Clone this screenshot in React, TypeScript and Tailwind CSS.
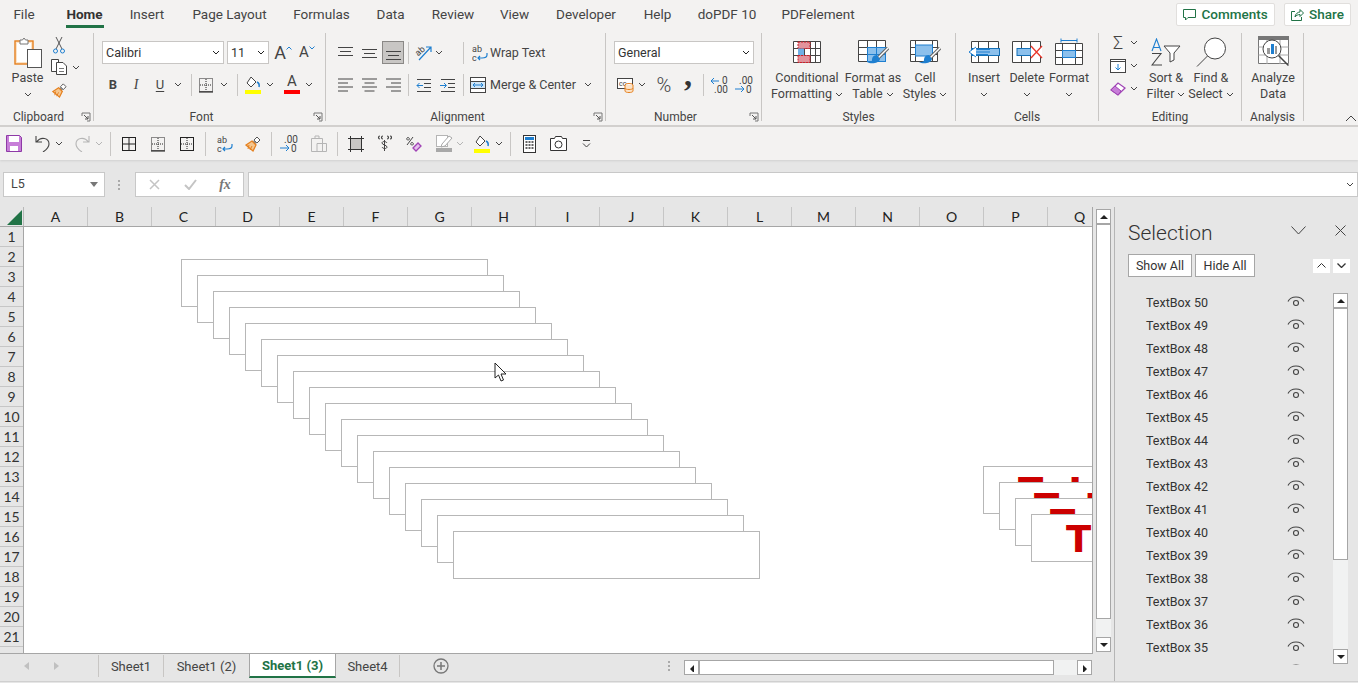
import type { ReactNode } from "react";

const tabs = [
  ["File", "w-[48px]"],
  ["Home", "w-[73px]"],
  ["Insert", "w-[52px]"],
  ["Page Layout", "w-[113px]"],
  ["Formulas", "w-[71px]"],
  ["Data", "w-[67px]"],
  ["Review", "w-[58px]"],
  ["View", "w-[65px]"],
  ["Developer", "w-[78px]"],
  ["Help", "w-[65px]"],
  ["doPDF 10", "w-[74px]"],
  ["PDFelement", "w-[108px]"],
];

const columns = ["A", "B", "C", "D", "E", "F", "G", "H", "I", "J", "K", "L", "M", "N", "O", "P", "Q"];
const rows = Array.from({ length: 21 }, (_, i) => i + 1);
const items = Array.from({ length: 17 }, (_, i) => 50 - i);

const Dd = ({ c = "#444" }: { c?: string }) => (
  <svg width="8" height="5" viewBox="0 0 8 5" className="shrink-0">
    <path d="M1 1l3 3 3-3" fill="none" stroke={c} strokeWidth="1" />
  </svg>
);

const Slot = ({ className, children }: { className: string; children?: ReactNode }) => (
  <div className={`flex shrink-0 items-center justify-center ${className}`}>{children}</div>
);

const Sep = ({ className = "" }: { className?: string }) => (
  <div className={`h-[22px] w-px shrink-0 bg-[#c8c6c4] ${className}`} />
);

const Launcher = () => (
  <svg width="10" height="10" viewBox="0 0 10 10" className="absolute bottom-[-1px] right-[2px]">
    <path d="M1 4V1h8v8H6" fill="none" stroke="#777" />
    <path d="M3 3l4 4M7 4v3H4" fill="none" stroke="#555" />
  </svg>
);

const Group = ({ w, label, launcher, children }: { w: string; label: string; launcher?: boolean; children: ReactNode }) => (
  <div className={`relative flex h-[88px] shrink-0 flex-col border-r border-[#c8c6c4] ${w}`}>
    <div className="h-[76px] shrink-0">{children}</div>
    <div className={`h-[16px] shrink-0 text-center text-[12px] leading-[16px] text-[#444] ${launcher ? "pr-[16px]" : ""}`}>{label}</div>
    {launcher && <Launcher />}
  </div>
);

const Big = ({ w, icon, l1, l2, dd }: { w: string; icon: ReactNode; l1: string; l2?: string; dd?: boolean }) => (
  <div className={`flex shrink-0 flex-col items-center ${w}`}>
    <div className="flex h-[37px] items-center justify-center">{icon}</div>
    <div className="h-[16px] whitespace-nowrap text-[12.5px] leading-[16px] text-[#444]">{l1}</div>
    <div className="flex h-[16px] items-center gap-[3px] whitespace-nowrap text-[12.5px] leading-[16px] text-[#444]">
      {l2}
      {dd && <Dd />}
    </div>
  </div>
);

const Select = ({ w, text }: { w: string; text: string }) => (
  <div className={`flex h-[23px] shrink-0 items-center justify-between border border-[#c8c6c4] bg-white pl-[3px] pr-[3px] text-[12.5px] text-[#333] ${w}`}>
    <span className="pt-[2px]">{text}</span>
    <Dd c="#222" />
  </div>
);

const Lines = ({ a }: { a: "l" | "c" | "r" }) => {
  const d = {
    l: "M1 2h15M1 6h10M1 10h15M1 14h10",
    c: "M1 2h15M3.5 6h10M1 10h15M3.5 14h10",
    r: "M1 2h15M6 6h10M1 10h15M6 14h10",
  }[a];
  return (
    <svg width="17" height="16" viewBox="0 0 17 16">
      <path d={d} stroke="#444" fill="none" />
    </svg>
  );
};

const VAlign = ({ p }: { p: number }) => (
  <svg width="17" height="16" viewBox="0 0 17 16">
    <path d={`M1 ${p + 0.5}h15M3 ${p + 4.5}h11M1 ${p + 8.5}h15`} stroke="#444" fill="none" />
  </svg>
);

const Indent = ({ right }: { right?: boolean }) => (
  <svg width="16" height="14" viewBox="0 0 16 14">
    <path d="M1 1.5h14M8 5.5h7M8 9.5h7M1 13.5h14" stroke="#444" fill="none" />
    <path d={right ? "M0 7.5h6M4 5l2.5 2.5L4 10" : "M7 7.5H1M3.5 5L1 7.5 3.5 10"} stroke="#1e7fd0" fill="none" />
  </svg>
);

const BorderIcon = ({ inner = "dot", outer = "dot" }: { inner?: string; outer?: string }) => (
  <svg width="16" height="16" viewBox="0 0 16 16">
    <rect x="1.5" y="1.5" width="13" height="13" fill="none" stroke="#222" strokeDasharray={outer === "dot" ? "1 1" : undefined} />
    <path d="M8 2v12M2 8h12" stroke="#222" strokeDasharray={inner === "dot" ? "1 1" : undefined} />
    {outer === "dot" && <path d="M1 15h14" stroke="#111" />}
  </svg>
);

const FillIcon = () => (
  <svg width="17" height="18" viewBox="0 0 17 18">
    <path d="M6 1l5 5-5 5-4-4z" fill="#fff" stroke="#444" />
    <path d="M12 6c2 1 2.500 3 2 5" fill="none" stroke="#1e7fd0" strokeWidth="1.500" />
    <rect x="0" y="14" width="16" height="4" fill="#ffff00" />
  </svg>
);

const FormatPainter = ({ s = 18 }: { s?: number }) => (
  <svg width={s} height={s} viewBox="0 0 18 18" className="shrink-0">
    <path d="M13 2l3 3-3 3-3-3z" fill="#fff" stroke="#555" />
    <path d="M10 5l3 3-2 1-2-2z" fill="#888" />
    <path d="M8 6l4 4-3 6-7-6z" fill="#f6c68d" stroke="#e5801f" strokeWidth="1.300" />
    <path d="M5 10l-1 4M8 11l-2 4" stroke="#e5801f" />
  </svg>
);

const PasteIcon = () => (
  <svg width="28" height="31" viewBox="0 0 28 31">
    <rect x="1" y="4" width="18" height="23" fill="#fbe3c8" stroke="#e5801f" strokeWidth="1.400" />
    <rect x="3" y="6" width="14" height="19" fill="#fff" />
    <path d="M6 7V3h2.500l1.500-2 1.500 2H14v4z" fill="#fff" stroke="#777" />
    <rect x="13.500" y="12.500" width="14" height="18" fill="#fff" stroke="#555" />
  </svg>
);

const CutIcon = () => (
  <svg width="12" height="17" viewBox="0 0 12 17" className="shrink-0">
    <path d="M3 0l6 12M9 0L3 12" stroke="#555" fill="none" />
    <circle cx="2.500" cy="14" r="2" fill="none" stroke="#1e7fd0" />
    <circle cx="9.500" cy="14" r="2" fill="none" stroke="#1e7fd0" />
  </svg>
);

const CopyIcon = () => (
  <svg width="16" height="16" viewBox="0 0 16 16" className="shrink-0">
    <path d="M.5.500h7v12h-7z" fill="#fff" stroke="#444" />
    <path d="M5.500 3.500H12l3.500 3.500v8.500h-10z" fill="#fff" stroke="#444" />
    <path d="M8 9.500h5M8 12.500h5" stroke="#777" />
  </svg>
);

const WrapIcon = () => (
  <svg width="16" height="18" viewBox="0 0 16 18">
    <text x="0" y="8" fontSize="9" fill="#444" fontFamily="Roboto">ab</text>
    <text x="0" y="17" fontSize="9" fill="#444" fontFamily="Roboto">c</text>
    <path d="M15 9v2c0 3-3 3-5 3H6m2-2l-2 2 2 2" stroke="#1e7fd0" fill="none" strokeWidth="1.200" />
  </svg>
);

const MergeIcon = () => (
  <svg width="16" height="16" viewBox="0 0 16 16">
    <rect x=".5" y=".5" width="15" height="15" fill="#fff" stroke="#444" />
    <path d="M.5 4.500h15M.5 11.500h15" stroke="#444" />
    <rect x="1" y="5" width="14" height="6" fill="#cfe6f8" />
    <path d="M3 8h10M5 6L3 8l2 2M11 6l2 2-2 2" stroke="#1e7fd0" fill="none" />
  </svg>
);

const OrientIcon = () => (
  <svg width="18" height="17" viewBox="0 0 18 17">
    <text x="0" y="10" fontSize="9" fill="#444" fontFamily="Roboto" transform="rotate(-40 5 7)">ab</text>
    <path d="M4 16L16 3M11 3h5v5" stroke="#1e7fd0" fill="none" strokeWidth="1.200" />
  </svg>
);

const MoneyIcon = () => (
  <svg width="17" height="16" viewBox="0 0 17 16">
    <rect x=".5" y="1.500" width="15" height="10" fill="#fff" stroke="#444" />
    <text x="2" y="9" fontSize="7" fill="#444" fontFamily="Roboto">cc</text>
    <ellipse cx="12" cy="8" rx="4" ry="1.500" fill="#fff" stroke="#e5801f" />
    <path d="M8 8v6c0 2 8 2 8 0V8M8 11c0 2 8 2 8 0" fill="#fbe3c8" stroke="#e5801f" />
  </svg>
);

const DecInc = () => (
  <svg width="20" height="19" viewBox="0 0 20 19">
    <path d="M9 6H1M4 3L1 6l3 3" stroke="#1e7fd0" fill="none" />
    <text x="12" y="9" fontSize="10" fill="#444" fontFamily="Roboto">0</text>
    <text x="4" y="18" fontSize="10" fill="#444" fontFamily="Roboto">.00</text>
  </svg>
);

const DecDec = () => (
  <svg width="20" height="19" viewBox="0 0 20 19">
    <text x="5" y="9" fontSize="10" fill="#444" fontFamily="Roboto">.00</text>
    <path d="M1 14h9M7 11l3 3-3 3" stroke="#1e7fd0" fill="none" />
    <text x="12" y="18" fontSize="10" fill="#444" fontFamily="Roboto">0</text>
  </svg>
);

const grid = "M.5.500h27v21H.5zM.5 7.500h27M.5 14.500h27M5.500 0v22M11.500 0v22M17.500 0v22M22.500 0v22";

const CondIcon = () => (
  <svg width="28" height="22" viewBox="0 0 28 22">
    <path d={grid} fill="#fff" stroke="#444" />
    <rect x="5" y="1" width="12" height="6.500" fill="#e2939c" stroke="#d0202a" strokeDasharray="2 1" />
    <rect x="5" y="7.500" width="6" height="7" fill="#6fb0e6" />
    <rect x="5" y="14.500" width="12" height="7" fill="#e2939c" stroke="#d0202a" strokeDasharray="2 1" />
  </svg>
);

const Brush = () => (
  <>
    <path d="M30 8l-11 11" stroke="#666" strokeWidth="3.500" />
    <path d="M30 8l-11 11" stroke="#fff" strokeWidth="1.500" />
    <path d="M19 15c-4 0-5 3-5 5s-3 2-5 2c3 2 12 2 13-3z" fill="#1e7fd0" />
  </>
);

const TableIcon = () => (
  <svg width="31" height="24" viewBox="0 0 31 24">
    <path d="M.5.500h27v21H.5zM.5 7.500h27M.5 14.500h27M9.500 0v22M18.500 0v22" fill="#fff" stroke="#444" />
    <rect x="9.500" y="7.500" width="18" height="14" fill="#8cc0ec" stroke="#1e7fd0" />
    <path d="M9.500 14.500h18M18.500 7.500v14" stroke="#1e7fd0" />
    <Brush />
  </svg>
);

const StylesIcon = () => (
  <svg width="31" height="24" viewBox="0 0 31 24">
    <path d="M.5.500h27v21H.5zM.5 7.500h27M.5 14.500h27M5.500 0v22M22.500 0v22" fill="#fff" stroke="#444" />
    <rect x="5.500" y="5" width="17" height="11" fill="#8cc0ec" stroke="#1e7fd0" />
    <Brush />
  </svg>
);

const InsertIcon = () => (
  <svg width="32" height="22" viewBox="0 0 32 22">
    <path d="M3.500.500h27v21h-27zM10.500 0v22M20.500 0v22" fill="#fff" stroke="#444" />
    <rect x="3.500" y="7.500" width="28" height="7" fill="#8cc0ec" stroke="#1470b8" />
    <path d="M22 11H8M22 8.500H8.500M8 6l-7 5 7 5" fill="#fff" stroke="#1e7fd0" />
    <path d="M20 13.500H8" stroke="#1e7fd0" />
  </svg>
);

const DeleteIcon = () => (
  <svg width="31" height="22" viewBox="0 0 31 22">
    <path d="M.5.500h28v21H.5zM9.500 0v22M18.500 0v22" fill="#fff" stroke="#444" />
    <rect x="5" y="7.500" width="14" height="7" fill="#8cc0ec" stroke="#1470b8" />
    <rect x="19" y="6" width="11" height="10" fill="#fff" />
    <path d="M19 5l11 12M30 5L19 17" stroke="#e8372c" strokeWidth="1.300" />
  </svg>
);

const FormatIcon = () => (
  <svg width="28" height="27" viewBox="0 0 28 27">
    <path d="M6 2.500h16M6 .5v4M22 .5v4" stroke="#1e7fd0" />
    <path d="M.5 5.500h27v21H.5zM.5 12.500h27M.5 19.500h27M7.500 5v22M20.500 5v22" fill="#fff" stroke="#444" />
    <rect x="7.500" y="12.500" width="13" height="7" fill="#8cc0ec" stroke="#1e7fd0" />
  </svg>
);

const SortIcon = () => (
  <svg width="30" height="28" viewBox="0 0 30 28">
    <path d="M1 13L5.500 1 10 13M2.500 9.500h6" fill="none" stroke="#1e7fd0" strokeWidth="1.100" />
    <path d="M1 15.500h9L1 27h10" fill="none" stroke="#444" strokeWidth="1.100" />
    <path d="M13 8h16l-6 7v7l-4 2v-9z" fill="#fff" stroke="#444" />
  </svg>
);

const FindIcon = () => (
  <svg width="31" height="30" viewBox="0 0 31 30">
    <circle cx="19" cy="11.500" r="10.500" fill="#fff" stroke="#444" />
    <path d="M11.500 19L1 29.500" stroke="#444" />
  </svg>
);

const AnalyzeIcon = () => (
  <svg width="33" height="33" viewBox="0 0 33 33">
    <path d="M1.500 1.500h30v27h-30z" fill="#fff" stroke="#777" />
    <rect x="1" y="1" width="31" height="4" fill="#777" />
    <path d="M1.500 12h30M1.500 20h30M10 5v24M23 5v24" stroke="#aaa" />
    <circle cx="15" cy="14" r="9" fill="#fff" stroke="#444" />
    <rect x="10" y="13" width="3" height="6" fill="#999" />
    <rect x="14" y="9" width="3" height="10" fill="#1e7fd0" />
    <rect x="18" y="11" width="2" height="8" fill="#999" />
    <path d="M21.500 20.500l10 10" stroke="#444" strokeWidth="1.500" />
  </svg>
);

const Eye = () => (
  <svg width="18" height="13" viewBox="0 0 18 13" className="-mt-[4px]">
    <path d="M1 6.500C4 .5 14 .5 17 6.500" fill="none" stroke="#444" strokeWidth="1.100" />
    <circle cx="9" cy="8" r="2.500" fill="none" stroke="#444" strokeWidth="1.100" />
  </svg>
);

const Tri = ({ dir }: { dir: "u" | "d" | "r" | "l" }) => {
  const d = { u: "M0 5l4-4 4 4z", d: "M0 1l4 4 4-4z", r: "M2 0l4 4-4 4z", l: "M6 0L2 4l4 4z" }[dir];
  return (
    <svg width="8" height="8" viewBox="0 0 8 6">
      <path d={d} fill="#222" />
    </svg>
  );
};

const ScrollBtn = ({ dir }: { dir: "u" | "d" | "r" | "l" }) => (
  <div className="flex h-[15px] w-[15px] shrink-0 items-center justify-center border border-[#a6a6a6] bg-white">
    <Tri dir={dir} />
  </div>
);

const TextBox = ({ x, y, w = "w-[307px]", children }: { x: string; y: string; w?: string; children?: ReactNode }) => (
  <div className={`absolute h-[48px] overflow-hidden border border-[#b7b7b7] bg-white ${x} ${y} ${w}`}>{children}</div>
);

const Red = () => (
  <div className="absolute left-[34px] top-[3px] flex whitespace-nowrap text-[37px] font-bold leading-[43px] text-[#cc0000] [font-family:'DejaVu_Sans',sans-serif]">
    <span>T</span>
    <span className="ml-[25px]">I</span>
  </div>
);

const boxes = [
  ["left-[157px]", "top-[32px]"],
  ["left-[173px]", "top-[48px]"],
  ["left-[189px]", "top-[64px]"],
  ["left-[205px]", "top-[80px]"],
  ["left-[221px]", "top-[96px]"],
  ["left-[237px]", "top-[112px]"],
  ["left-[253px]", "top-[128px]"],
  ["left-[269px]", "top-[144px]"],
  ["left-[285px]", "top-[160px]"],
  ["left-[301px]", "top-[176px]"],
  ["left-[317px]", "top-[192px]"],
  ["left-[333px]", "top-[208px]"],
  ["left-[349px]", "top-[224px]"],
  ["left-[365px]", "top-[240px]"],
  ["left-[381px]", "top-[256px]"],
  ["left-[397px]", "top-[272px]"],
  ["left-[413px]", "top-[288px]"],
  ["left-[429px]", "top-[304px]"],
];

const Ribbon = () => (
  <div className="flex h-[97px] shrink-0 bg-[#f3f2f1] pt-[5px]">
    <Group w="w-[94px]" label="Clipboard" launcher>
      <div className="flex">
        <div className="flex w-[55px] flex-col items-center pt-[4px]">
          <PasteIcon />
          <div className="mt-[2px] h-[16px] text-[12.5px] leading-[16px] text-[#444]">Paste</div>
          <div className="flex h-[16px] items-center"><Dd /></div>
        </div>
        <div className="-ml-[4px] flex flex-col pt-[3px]">
          <Slot className="h-[18px] w-[16px]"><CutIcon /></Slot>
          <div className="mt-[4px] flex h-[18px] items-center"><CopyIcon /><div className="ml-[5px]"><Dd /></div></div>
          <Slot className="mt-[4px] h-[20px] w-[16px]"><FormatPainter s={17} /></Slot>
        </div>
      </div>
    </Group>

    <Group w="w-[232px]" label="Font" launcher>
      <div className="mt-[8px] flex h-[23px] items-center pl-[8px]">
        <Select w="w-[122px]" text="Calibri" />
        <div className="ml-[3px]"><Select w="w-[42px]" text="11" /></div>
        <Slot className="w-[28px] text-[18px] text-[#444]">
          A<svg width="6" height="4" viewBox="0 0 6 4" className="mb-[9px]"><path d="M.5 3.500L3 1l2.500 2.500" fill="none" stroke="#1e7fd0" /></svg>
        </Slot>
        <Slot className="w-[20px] text-[15px] text-[#444]">
          A<svg width="6" height="4" viewBox="0 0 6 4" className="mb-[9px]"><path d="M.5.500L3 3 5.500.500" fill="none" stroke="#1e7fd0" /></svg>
        </Slot>
      </div>
      <div className="mt-[9px] flex h-[23px] items-center pl-[7px]">
        <Slot className="w-[24px] text-[13px] font-bold text-[#444]">B</Slot>
        <Slot className="w-[22px] font-['Liberation_Serif'] text-[14px] italic text-[#444]">I</Slot>
        <Slot className="w-[26px] text-[13px] text-[#444] underline underline-offset-2">U</Slot>
        <Slot className="w-[10px]"><Dd /></Slot>
        <Sep className="ml-[8px]" />
        <Slot className="w-[28px]"><BorderIcon /></Slot>
        <Slot className="w-[8px]"><Dd /></Slot>
        <Sep className="ml-[9px]" />
        <Slot className="ml-[2px] w-[26px]"><FillIcon /></Slot>
        <Slot className="w-[8px]"><Dd /></Slot>
        <Slot className="ml-[5px] w-[26px]">
          <div className="flex flex-col items-center">
            <span className="h-[13px] text-[15px] leading-[13px] text-[#444]">A</span>
            <span className="mt-[2px] h-[4px] w-[16px] bg-[#ff0000]" />
          </div>
        </Slot>
        <Slot className="w-[8px]"><Dd /></Slot>
      </div>
    </Group>

    <Group w="w-[280px]" label="Alignment" launcher>
      <div className="mt-[8px] flex h-[23px] items-center pl-[7px]">
        <Slot className="w-[24px]"><VAlign p={2} /></Slot>
        <Slot className="w-[24px]"><VAlign p={4} /></Slot>
        <Slot className="w-[24px]">
          <div className="flex h-[23px] w-[22px] items-center justify-center border border-[#8a8886] bg-[#c8c6c4]"><VAlign p={6} /></div>
        </Slot>
        <Sep className="ml-[3px]" />
        <Slot className="ml-[4px] w-[22px]"><OrientIcon /></Slot>
        <Slot className="w-[8px]"><Dd /></Slot>
        <Sep className="ml-[20px]" />
        <Slot className="ml-[8px] w-[16px]"><WrapIcon /></Slot>
        <div className="ml-[2px] whitespace-nowrap pt-[2px] text-[12.5px] text-[#444]">Wrap Text</div>
      </div>
      <div className="mt-[9px] flex h-[23px] items-center pl-[7px]">
        <Slot className="w-[24px]"><Lines a="l" /></Slot>
        <Slot className="w-[24px]"><Lines a="c" /></Slot>
        <Slot className="w-[24px]"><Lines a="r" /></Slot>
        <Sep className="ml-[3px]" />
        <Slot className="ml-[3px] w-[24px]"><Indent /></Slot>
        <Slot className="w-[24px]"><Indent right /></Slot>
        <Sep className="ml-[3px]" />
        <Slot className="ml-[6px] w-[16px]"><MergeIcon /></Slot>
        <div className="ml-[4px] w-[85px] whitespace-nowrap pt-[2px] text-[12.5px] text-[#444]">Merge &amp; Center</div>
        <Slot className="ml-[9px] w-[8px]"><Dd /></Slot>
      </div>
    </Group>

    <Group w="w-[156px]" label="Number" launcher>
      <div className="ml-[8px] mt-[8px]"><Select w="w-[140px]" text="General" /></div>
      <div className="mt-[9px] flex h-[23px] items-center">
        <Slot className="ml-[10px] w-[18px]"><MoneyIcon /></Slot>
        <Slot className="ml-[4px] w-[8px]"><Dd /></Slot>
        <Slot className="ml-[7px] w-[22px] text-[20px] font-light text-[#444]">%</Slot>
        <Slot className="ml-[1px] w-[24px] text-[#333]">
          <span className="mb-[20px] font-['Liberation_Serif'] text-[32px] font-bold leading-[28px]">,</span>
        </Slot>
        <Sep className="ml-[3px]" />
        <Slot className="ml-[4px] w-[24px]"><DecInc /></Slot>
        <Slot className="w-[24px]"><DecDec /></Slot>
      </div>
    </Group>

    <Group w="w-[194px]" label="Styles">
      <div className="flex">
        <Big w="w-[90px]" icon={<CondIcon />} l1="Conditional" l2="Formatting" dd />
        <Big w="w-[42px]" icon={<TableIcon />} l1="Format as" l2="Table" dd />
        <Big w="w-[62px]" icon={<StylesIcon />} l1="Cell" l2="Styles" dd />
      </div>
    </Group>

    <Group w="w-[143px]" label="Cells">
      <div className="flex">
        <Big w="w-[56px]" icon={<InsertIcon />} l1="Insert" dd />
        <Big w="w-[30px]" icon={<DeleteIcon />} l1="Delete" dd />
        <Big w="w-[54px]" icon={<FormatIcon />} l1="Format" dd />
      </div>
    </Group>

    <Group w="w-[143px]" label="Editing">
      <div className="flex">
        <div className="ml-[7px] -mt-[2px] flex w-[32px] flex-col">
          <div className="flex h-[23px] items-center">
            <Slot className="w-[24px] text-[18px] font-light text-[#444]">Σ</Slot>
            <Dd />
          </div>
          <div className="flex h-[23px] items-center">
            <Slot className="w-[24px]">
              <svg width="16" height="14" viewBox="0 0 16 14">
                <rect x=".5" y=".5" width="15" height="13" fill="#fff" stroke="#444" />
                <path d="M.5 2.500h15" stroke="#444" />
                <path d="M8 5v6M5.500 8.500L8 11l2.500-2.500" fill="none" stroke="#1e7fd0" />
              </svg>
            </Slot>
            <Dd />
          </div>
          <div className="flex h-[23px] items-center">
            <Slot className="w-[24px]">
              <svg width="16" height="14" viewBox="0 0 16 14">
                <path d="M1 8l7-7 7 5-7 7z" fill="#fff" stroke="#a044b5" strokeWidth="1.300" />
                <path d="M1 8l4-4 6 5-3 4z" fill="#c77ed8" stroke="#a044b5" />
              </svg>
            </Slot>
            <Dd />
          </div>
        </div>
        <Big w="w-[56px]" icon={<SortIcon />} l1="Sort &" l2="Filter" dd />
        <Big w="w-[34px]" icon={<FindIcon />} l1="Find &" l2="Select" dd />
      </div>
    </Group>

    <Group w="w-[62px]" label="Analysis">
      <Big w="w-[62px]" icon={<AnalyzeIcon />} l1="Analyze" l2="Data" />
    </Group>

    <div className="ml-[41px] mt-[82px] h-[6px]">
      <svg width="12" height="7" viewBox="0 0 12 7"><path d="M1 6l5-5 5 5" fill="none" stroke="#444" /></svg>
    </div>
  </div>
);

const Qat = () => (
  <div className="flex h-[33px] shrink-0 items-center bg-[#f3f2f1] shadow-[0_1px_2px_#d0d0d0]">
    <Slot className="w-[28px]">
      <svg width="16" height="17" viewBox="0 0 16 17">
        <path d="M.5.500h13l2 2v14H.5z" fill="#c77ed8" stroke="#8e3aa6" />
        <rect x="3" y="1" width="10" height="6" fill="#fff" />
        <rect x="4" y="11" width="8" height="5" fill="#fff" />
      </svg>
    </Slot>
    <Slot className="w-[28px]">
      <svg width="15" height="17" viewBox="0 0 15 17"><path d="M1 1v6h6M1.500 7C6 1 14 3 14 9c0 3-3 6-6 8" fill="none" stroke="#444" strokeWidth="1.100" /></svg>
    </Slot>
    <Slot className="w-[6px]"><Dd /></Slot>
    <Slot className="ml-[6px] w-[28px]">
      <svg width="15" height="17" viewBox="0 0 15 17"><path d="M14 1v6H8M13.500 7C9 1 1 3 1 9c0 3 3 6 6 8" fill="none" stroke="#b5b5b5" strokeWidth="1.100" /></svg>
    </Slot>
    <Slot className="w-[6px]"><Dd c="#b5b5b5" /></Slot>
    <Sep className="ml-[8px] h-[24px]" />
    <Slot className="ml-[3px] w-[29px]"><BorderIcon inner="line" outer="line" /></Slot>
    <Slot className="w-[29px]"><BorderIcon /></Slot>
    <Slot className="w-[29px]"><BorderIcon outer="line" /></Slot>
    <Sep className="ml-[4px] h-[24px]" />
    <Slot className="ml-[5px] w-[28px]"><WrapIcon /></Slot>
    <Slot className="w-[28px]"><FormatPainter /></Slot>
    <Sep className="ml-[4px] h-[24px]" />
    <Slot className="ml-[3px] w-[28px]"><DecDec /></Slot>
    <Slot className="ml-[2px] w-[28px]">
      <svg width="16" height="17" viewBox="0 0 16 17">
        <path d="M.5 3.500h11v13H.5zM4 3V1h4v2M6 8.500h9.500v8H6z" fill="none" stroke="#b5b5b5" />
      </svg>
    </Slot>
    <Sep className="ml-[4px] h-[24px]" />
    <Slot className="ml-[4px] w-[28px]">
      <svg width="16" height="16" viewBox="0 0 16 16">
        <rect x="2.500" y="2.500" width="11" height="11" fill="#c8c6c4" stroke="#333" />
        <path d="M0 2.500h16M0 13.500h16M2.500 0v16M13.500 0v16" stroke="#333" />
      </svg>
    </Slot>
    <Slot className="w-[28px] text-[#444]">
      <svg width="15" height="17" viewBox="0 0 15 17">
        <path d="M3 1c-2 0-2 3 0 3M6 1c-2 0-2 3 0 3M10 1c2 0 2 3 0 3M13 1c2 0 2 3 0 3" fill="none" stroke="#444" strokeWidth="1.200" />
        <path d="M10 8c-1-2-5-2-5 0s5 2 5 4-4 2-5 0M7.500 5v11" fill="none" stroke="#444" />
      </svg>
    </Slot>
    <Slot className="ml-[2px] w-[28px]">
      <svg width="16" height="16" viewBox="0 0 16 16">
        <path d="M1 9l6-8M2 1.500a1.300 1.300 0 1 0 .1 0M6 6.500a1.300 1.300 0 1 0 .1 0" fill="none" stroke="#444" />
        <path d="M7 12l5-5 3 3-5 5z" fill="#e5c0ee" stroke="#a044b5" strokeWidth="1.300" />
      </svg>
    </Slot>
    <Slot className="ml-[4px] w-[24px]">
      <svg width="17" height="17" viewBox="0 0 17 17">
        <rect x=".5" y=".5" width="11" height="11" fill="#fff" stroke="#b5b5b5" />
        <path d="M6 9l7-8 3 2-7 8-4 1z" fill="#fff" stroke="#a8a8a8" />
        <rect x="0" y="13" width="16" height="4" fill="#a8a8a8" />
      </svg>
    </Slot>
    <Slot className="w-[8px]"><Dd c="#b5b5b5" /></Slot>
    <Slot className="ml-[4px] w-[28px]"><FillIcon /></Slot>
    <Slot className="w-[6px]"><Dd /></Slot>
    <Sep className="ml-[8px] h-[24px]" />
    <Slot className="ml-[4px] w-[28px]">
      <svg width="13" height="18" viewBox="0 0 13 18">
        <rect x=".5" y=".5" width="12" height="17" fill="#fff" stroke="#333" />
        <rect x="2" y="2" width="9" height="3" fill="#1e7fd0" />
        <path d="M2.500 7h2M5.500 7h2M8.500 7h2M2.500 10h2M5.500 10h2M8.500 10h2M2.500 13h2M5.500 13h2M8.500 13h2" stroke="#333" strokeWidth="1.500" />
      </svg>
    </Slot>
    <Slot className="ml-[1px] w-[28px]">
      <svg width="17" height="15" viewBox="0 0 17 15">
        <path d="M.5 2.500h4l1-2h6l1 2h4v12H.5z" fill="#fff" stroke="#333" />
        <circle cx="8.500" cy="8.500" r="3.500" fill="none" stroke="#333" />
      </svg>
    </Slot>
    <Slot className="w-[28px]">
      <svg width="9" height="9" viewBox="0 0 9 9"><path d="M1 1.500h7M1 4.500l3.500 3.500L8 4.500" fill="none" stroke="#444" /></svg>
    </Slot>
  </div>
);

const FormulaBar = () => (
  <div className="flex h-[47px] shrink-0 pt-[12px]">
    <div className="ml-[3px] flex h-[25px] w-[102px] items-center justify-between border border-[#c8c8c8] bg-white pl-[7px] pr-[6px] text-[12.5px] text-[#444]">
      L5
      <svg width="8" height="5" viewBox="0 0 8 5"><path d="M0 0h8L4 5z" fill="#777" /></svg>
    </div>
    <div className="ml-[12px] flex h-[25px] w-[4px] flex-col items-center justify-center gap-[2px]">
      <span className="h-[2px] w-[2px] bg-[#aaa]" />
      <span className="h-[2px] w-[2px] bg-[#aaa]" />
      <span className="h-[2px] w-[2px] bg-[#aaa]" />
    </div>
    <div className="ml-[14px] flex h-[25px] w-[109px] items-center border border-[#c8c8c8] bg-white">
      <Slot className="ml-[6px] w-[24px]">
        <svg width="11" height="11" viewBox="0 0 11 11"><path d="M1 1l9 9M10 1l-9 9" stroke="#c4c4c4" strokeWidth="1.500" /></svg>
      </Slot>
      <Slot className="ml-[12px] w-[24px]">
        <svg width="13" height="11" viewBox="0 0 13 11"><path d="M1 6l4 4 7-9" fill="none" stroke="#c4c4c4" strokeWidth="2" /></svg>
      </Slot>
      <Slot className="ml-[11px] w-[24px] font-['Liberation_Serif'] text-[14px] font-bold italic text-[#777]">fx</Slot>
    </div>
    <div className="ml-[4px] flex h-[25px] flex-1 items-center justify-end border border-[#c8c8c8] bg-white pr-[3px]">
      <Dd />
    </div>
  </div>
);

const Sheet = () => (
  <div className="flex h-[447px] w-[1093px] shrink-0 flex-col overflow-hidden border-b border-r border-[#a6a6a6]">
    <div className="flex h-[20px] shrink-0 border-b border-[#a6a6a6]">
      <div className="flex w-[24px] shrink-0 items-end justify-end border-r border-[#b8b8b8] pb-[1px] pr-[1px]">
        <svg width="15" height="15" viewBox="0 0 15 15"><path d="M15 0v15H0z" fill="#217346" /></svg>
      </div>
      {columns.map((c) => (
        <div key={c} className="flex w-[64px] shrink-0 items-center justify-center border-r border-[#c6c6c6] font-['Lato'] text-[14px] text-[#222]">
          {c}
        </div>
      ))}
    </div>
    <div className="flex min-h-0 flex-1">
      <div className="w-[24px] shrink-0 overflow-hidden border-r border-[#a6a6a6]">
        {rows.map((r) => (
          <div key={r} className="flex h-[20px] items-center justify-center border-b border-[#c6c6c6] font-['Lato'] text-[14px] text-[#333]">
            {r}
          </div>
        ))}
      </div>
      <div className="relative flex-1 overflow-hidden bg-white">
        {boxes.map(([x, y]) => (
          <TextBox key={y} x={x} y={y} />
        ))}
        <TextBox x="left-[959px]" y="top-[239px]"><Red /></TextBox>
        <TextBox x="left-[975px]" y="top-[255px]"><Red /></TextBox>
        <TextBox x="left-[991px]" y="top-[271px]"><Red /></TextBox>
        <TextBox x="left-[1007px]" y="top-[287px]"><Red /></TextBox>
        <svg width="14" height="21" viewBox="0 0 14 21" className="absolute left-[470px] top-[135px]">
          <path d="M1 1v15l3.500-3 2.500 6 2.500-1-2.500-6H12z" fill="#fff" stroke="#222" />
        </svg>
      </div>
    </div>
  </div>
);

const VScroll = ({ track }: { track: string }) => (
  <div className="flex h-full w-[15px] flex-col">
    <ScrollBtn dir="u" />
    <div className={`${track} w-[15px] shrink-0 border border-[#a6a6a6] bg-white`} />
    <div className="flex-1 bg-[#f1f2f2]" />
    <ScrollBtn dir="d" />
  </div>
);

const SheetTabs = () => (
  <div className="flex h-[27px] w-[1093px] shrink-0 items-start">
    <div className="flex h-[24px] items-center">
      <Slot className="ml-[23px] w-[8px]">
        <svg width="6" height="8" viewBox="0 0 6 8"><path d="M5 0v8L0 4z" fill="#c0c0c0" /></svg>
      </Slot>
      <Slot className="ml-[21px] w-[8px]">
        <svg width="6" height="8" viewBox="0 0 6 8"><path d="M1 0v8l5-4z" fill="#c0c0c0" /></svg>
      </Slot>
      <Sep className="ml-[38px] h-[20px]" />
      <div className="w-[64px] pt-[1px] text-center text-[13px] text-[#444]">Sheet1</div>
      <Sep className="h-[20px]" />
      <div className="w-[85px] pt-[1px] text-center text-[13px] text-[#444]">Sheet1 (2)</div>
      <div className="flex h-[24px] w-[87px] items-center justify-center border-x border-b-2 border-[#a6a6a6] border-b-[#217346] bg-white pt-[1px] text-[13px] font-bold text-[#217346]">
        Sheet1 (3)
      </div>
      <div className="w-[63px] pt-[1px] text-center text-[13px] text-[#444]">Sheet4</div>
      <Sep className="h-[20px]" />
      <Slot className="ml-[33px] w-[16px]">
        <svg width="16" height="16" viewBox="0 0 16 16">
          <circle cx="8" cy="8" r="7" fill="none" stroke="#777" strokeWidth="1.300" />
          <path d="M8 4v8M4 8h8" stroke="#777" strokeWidth="1.500" />
        </svg>
      </Slot>
      <div className="ml-[219px] flex h-[10px] w-[3px] flex-col justify-between">
        <span className="h-[2px] w-[2px] bg-[#aaa]" />
        <span className="h-[2px] w-[2px] bg-[#aaa]" />
        <span className="h-[2px] w-[2px] bg-[#aaa]" />
      </div>
    </div>
    <div className="ml-[13px] mt-[6px] flex h-[15px] w-[408px] shrink-0">
      <ScrollBtn dir="l" />
      <div className="w-[355px] shrink-0 border border-[#a6a6a6] bg-white" />
      <div className="flex-1 bg-[#f1f2f2]" />
      <ScrollBtn dir="r" />
    </div>
  </div>
);

const Selection = () => (
  <div className="flex h-full w-[244px] shrink-0 flex-col border-l border-[#b5b5b5]">
    <div className="flex h-[47px] shrink-0 items-center pl-[13px] pt-[6px]">
      <div className="w-[163px] font-light text-[21px] leading-none text-[#333]">Selection</div>
      <svg width="15" height="9" viewBox="0 0 15 9" className="mb-[6px]"><path d="M.5.500L7.500 8l7-7.500" fill="none" stroke="#444" /></svg>
      <svg width="11" height="11" viewBox="0 0 11 11" className="mb-[6px] ml-[29px]"><path d="M.5.500l10 10M10.500.500l-10 10" stroke="#444" /></svg>
    </div>
    <div className="flex h-[23px] shrink-0 items-center pl-[13px]">
      <div className="flex h-[23px] w-[64px] items-center justify-center border border-[#a6a6a6] bg-white pt-[1px] text-[12.5px] text-[#333]">Show All</div>
      <div className="ml-[3px] flex h-[23px] w-[60px] items-center justify-center border border-[#a6a6a6] bg-white pt-[1px] text-[12.5px] text-[#333]">Hide All</div>
      <div className="ml-[58px] flex h-[14px] w-[17px] items-center justify-center bg-white">
        <svg width="9" height="5" viewBox="0 0 9 5"><path d="M.5 4.500l4-4 4 4" fill="none" stroke="#333" /></svg>
      </div>
      <div className="ml-[3px] flex h-[14px] w-[17px] items-center justify-center bg-white">
        <svg width="9" height="5" viewBox="0 0 9 5"><path d="M.5.500l4 4 4-4" fill="none" stroke="#333" strokeWidth="1.300" /></svg>
      </div>
    </div>
    <div className="mt-[15px] flex h-[374px] shrink-0">
      <div className="h-[373px] w-[218px] shrink-0 overflow-hidden">
        {items.map((n) => (
          <div key={n} className="flex h-[23px] items-center justify-between pl-[31px] pr-[28px] text-[12.5px] text-[#333]">
            <span>TextBox {n}</span>
            <Eye />
          </div>
        ))}
      </div>
      <div className="-mt-[1px] h-[373px] pt-[2px]">
        <VScroll track="h-[252px]" />
      </div>
    </div>
  </div>
);

export default function App() {
  return (
    <div className="flex h-[683px] w-[1358px] flex-col overflow-hidden bg-[#e6e6e6] font-['Roboto',sans-serif]">
      <div className="flex h-[28px] shrink-0 items-center bg-[#f3f2f1]">
        {tabs.map(([t, w]) => (
          <div key={t} className={`relative flex h-[28px] items-center justify-center whitespace-nowrap text-[13.5px] ${w} ${t === "Home" ? "font-bold text-[#333]" : "text-[#444]"}`}>
            {t}
            {t === "Home" && <span className="absolute bottom-0 left-[18px] h-[3px] w-[38px] bg-[#217346]" />}
          </div>
        ))}
        <div className="ml-auto flex items-center pr-[7px]">
          <div className="flex h-[23px] w-[99px] items-center justify-center gap-[5px] rounded-[2px] border border-[#e1dfdd] bg-white text-[13.5px] font-medium text-[#217346]">
            <svg width="13" height="13" viewBox="0 0 13 13"><path d="M.5 1.500h12v8H5l-2.500 2.500V9.500h-2z" fill="none" stroke="#217346" /></svg>
            Comments
          </div>
          <div className="ml-[9px] flex h-[23px] w-[67px] items-center justify-center gap-[5px] rounded-[2px] border border-[#e1dfdd] bg-white text-[13.5px] font-medium text-[#217346]">
            <svg width="13" height="13" viewBox="0 0 13 13"><path d="M4 3.500H.5v9h10V9M4 9c0-3 3-5 5-5V1.500l3.500 3.500L9 8.500V6.500C7 6.500 5 7.500 4 9z" fill="none" stroke="#217346" /></svg>
            Share
          </div>
        </div>
      </div>
      <Ribbon />
      <div className="h-[2px] shrink-0 bg-[#d2d0ce]" />
      <Qat />
      <FormulaBar />
      <div className="flex h-[474px] shrink-0">
        <div className="flex w-[1114px] shrink-0 flex-col">
          <div className="flex">
            <Sheet />
            <div className="ml-[3px] h-[445px] pt-[2px]">
              <VScroll track="h-[395px]" />
            </div>
          </div>
          <SheetTabs />
        </div>
        <Selection />
      </div>
      <div className="flex-1 border-t border-[#d0d0d0]" />
    </div>
  );
}
